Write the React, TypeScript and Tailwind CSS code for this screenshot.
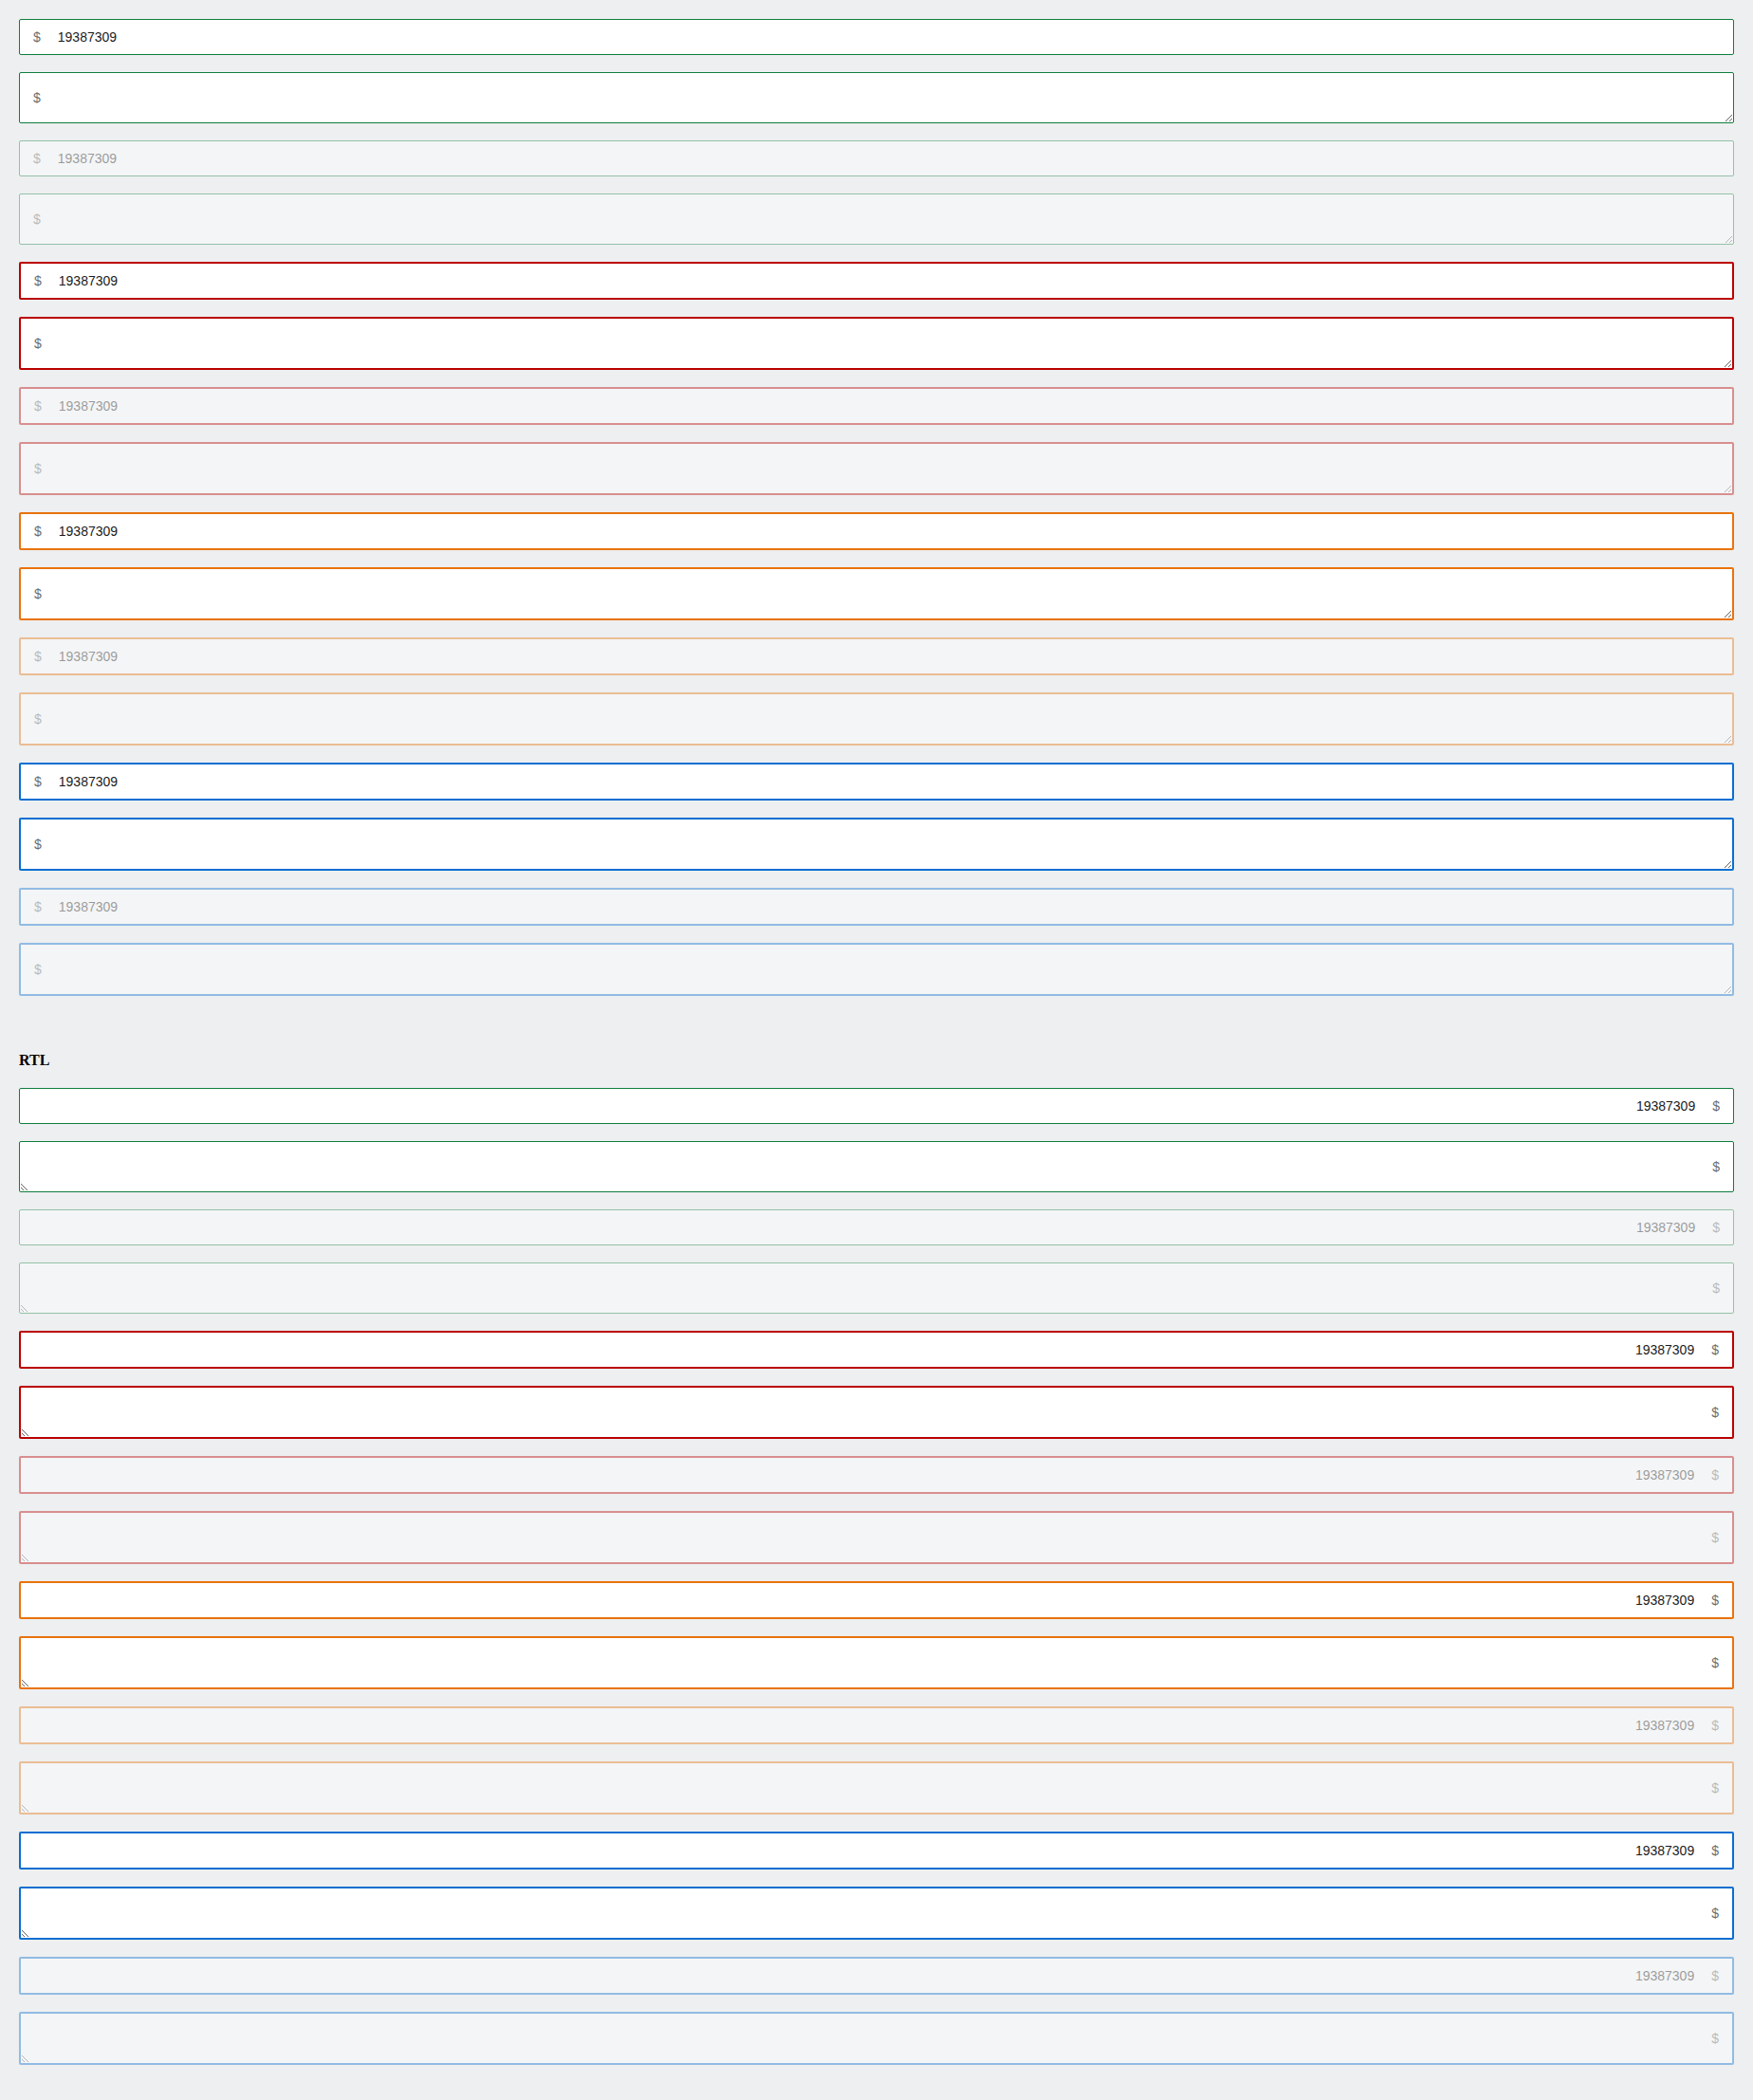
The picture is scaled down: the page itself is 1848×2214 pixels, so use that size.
import React from "react";

type State = {
  key: string;
  border: string;
  thin: boolean;
};

const STATES: State[] = [
  { key: "success", border: "border-[#107e3e]", thin: true },
  { key: "error", border: "border-[#bb0000]", thin: false },
  { key: "warning", border: "border-[#e9730c]", thin: false },
  { key: "info", border: "border-[#0a6ed1]", thin: false },
];

function Field({
  state,
  multiline,
  disabled,
  rtl,
}: {
  state: State;
  multiline: boolean;
  disabled: boolean;
  rtl: boolean;
}) {
  const h = state.thin
    ? multiline
      ? "h-[54px] border"
      : "h-[38px] border"
    : multiline
      ? "h-[56px] border-2"
      : "h-[40px] border-2";
  const pad = rtl ? "pr-[14px]" : "pl-[14px]";
  const gap = rtl ? "mr-[18px]" : "ml-[18px]";
  return (
    <div
      dir={rtl ? "rtl" : "ltr"}
      className={`flex items-center rounded-[2px] bg-white font-['Liberation_Sans',Arial,sans-serif] ${h} ${state.border} ${pad} ${
        disabled ? "opacity-40" : ""
      }`}
    >
      <span className="text-[14px] leading-[18px] text-[#6a6d70]">$</span>
      {multiline ? (
        <textarea
          readOnly
          className={`h-full flex-1 resize-y bg-transparent font-['Liberation_Sans',Arial,sans-serif] text-[14px] text-[#1b1b1b] outline-none ${gap}`}
        />
      ) : (
        <input
          readOnly
          value="19387309"
          className={`min-w-0 flex-1 bg-transparent font-['Liberation_Sans',Arial,sans-serif] text-[14px] leading-[18px] text-[#1b1b1b] outline-none ${gap}`}
        />
      )}
    </div>
  );
}

function Section({ rtl }: { rtl: boolean }) {
  return (
    <div className="flex flex-col gap-[18px]">
      {STATES.map((s) => (
        <React.Fragment key={s.key}>
          <Field state={s} multiline={false} disabled={false} rtl={rtl} />
          <Field state={s} multiline={true} disabled={false} rtl={rtl} />
          <Field state={s} multiline={false} disabled={true} rtl={rtl} />
          <Field state={s} multiline={true} disabled={true} rtl={rtl} />
        </React.Fragment>
      ))}
    </div>
  );
}

export default function App() {
  return (
    <div className="min-h-screen bg-[#edeff0] p-[20px]">
      <Section rtl={false} />
      <h4 className="mb-[20px] mt-[59px] font-['Liberation_Serif','Times_New_Roman',serif] text-[16px] font-bold leading-[18px] text-black">
        RTL
      </h4>
      <Section rtl={true} />
    </div>
  );
}
